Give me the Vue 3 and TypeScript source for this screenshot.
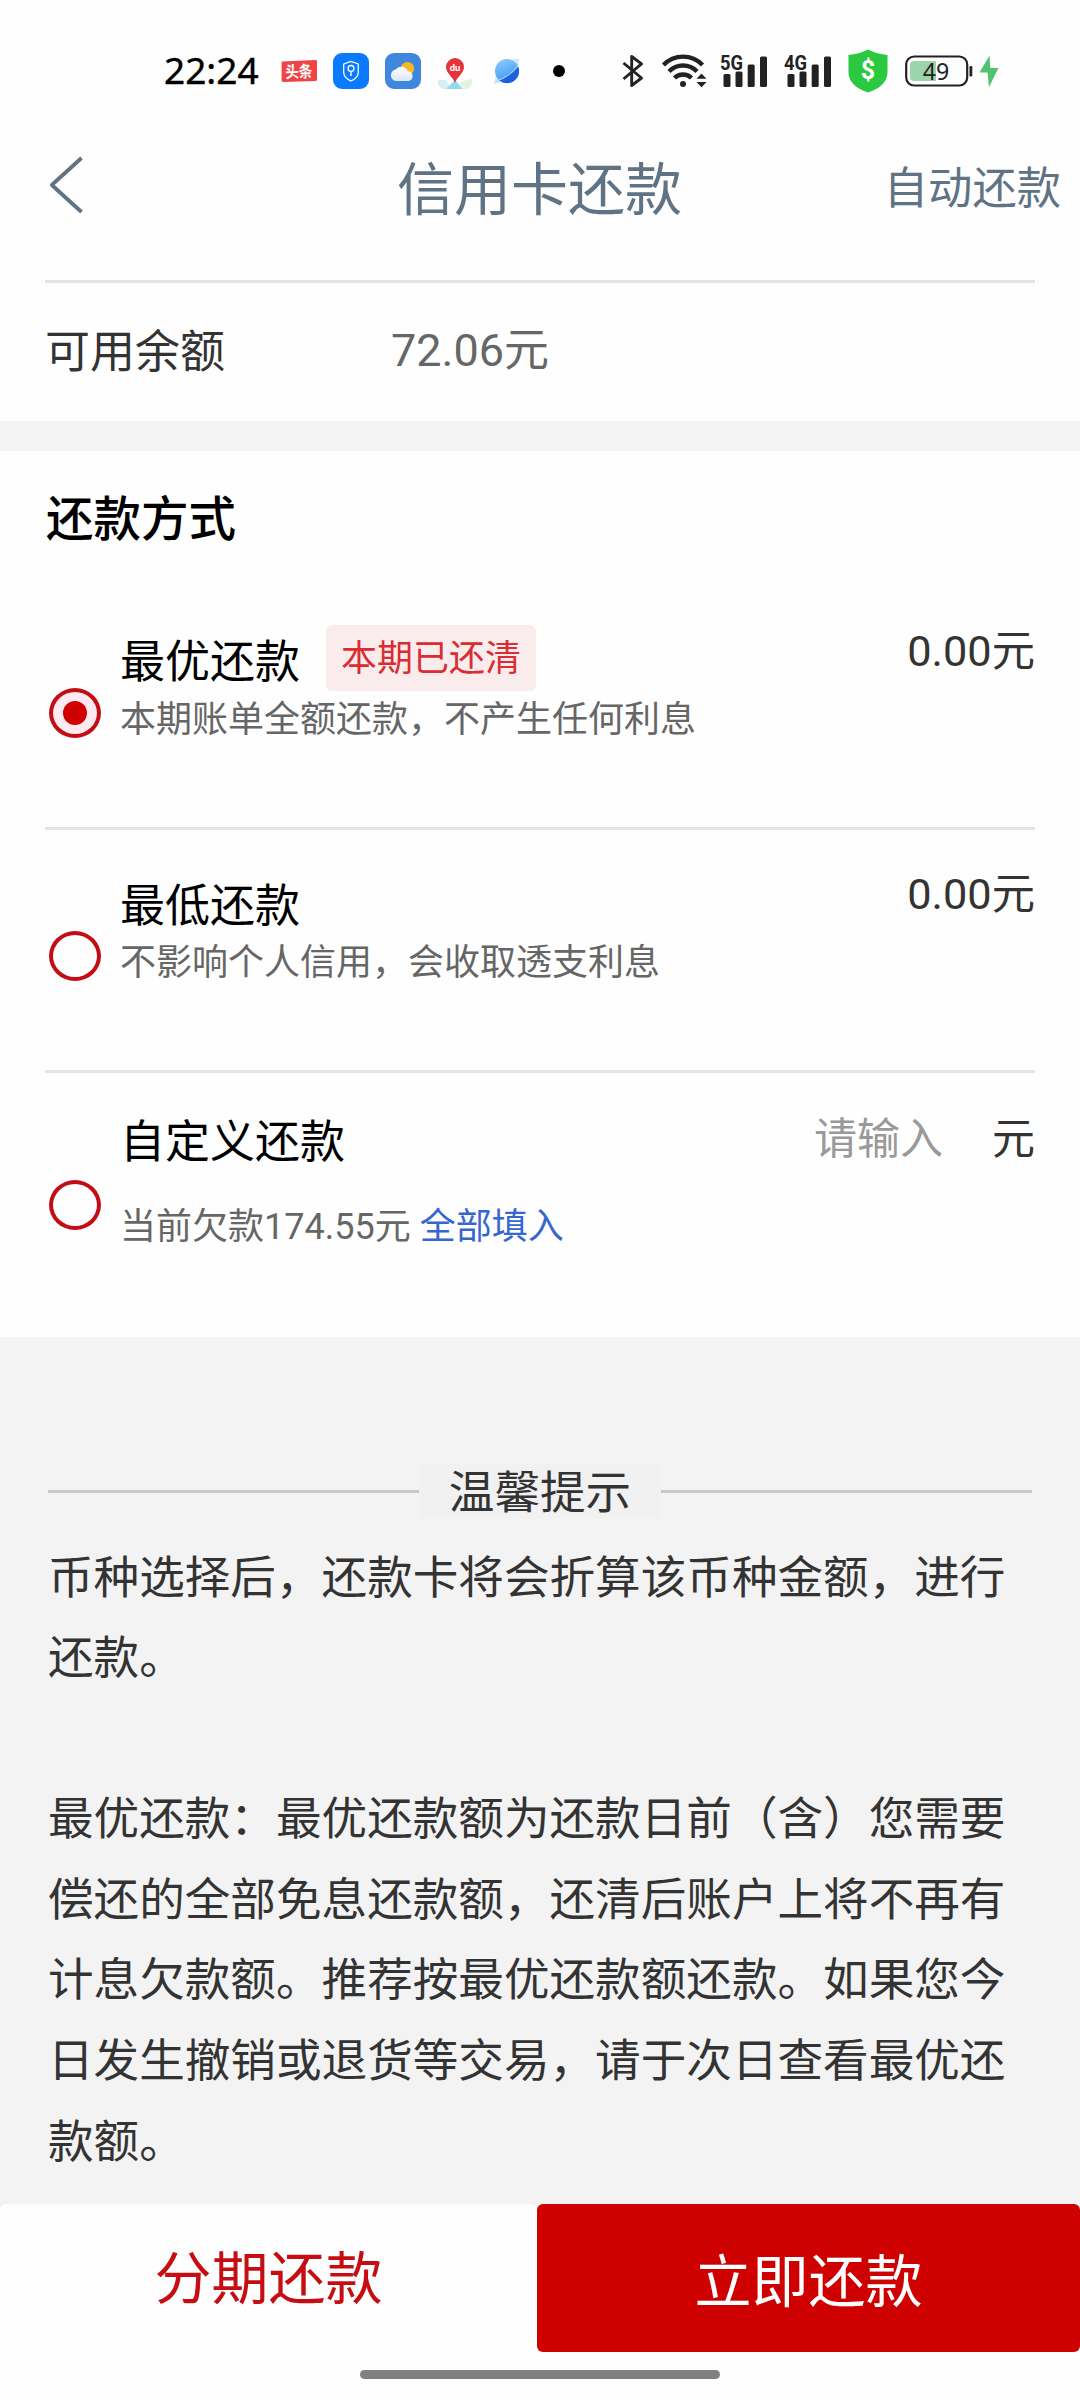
<script setup lang="ts">
interface RepayOption {
  id: string
  title: string
  tag?: string
  desc: string
  amount?: string
  fillAction?: string
}

const options: RepayOption[] = [
  { id: 'best', title: '最优还款', tag: '本期已还清', desc: '本期账单全额还款，不产生任何利息', amount: '0.00元' },
  { id: 'minimum', title: '最低还款', desc: '不影响个人信用，会收取透支利息', amount: '0.00元' },
  { id: 'custom', title: '自定义还款', desc: '当前欠款174.55元', fillAction: '全部填入' },
]
const selected = 'best'

const tips: string[] = [
  '币种选择后，还款卡将会折算该币种金额，进行还款。',
  '最优还款：最优还款额为还款日前（含）您需要偿还的全部免息还款额，还清后账户上将不再有计息欠款额。推荐按最优还款额还款。如果您今日发生撤销或退货等交易，请于次日查看最优还款额。',
]

const networks: string[] = ['5G', '4G']
</script>

<template>
  <div class="page">
    <div class="status">
      <span class="clock">22:24</span>
      <div class="apps">
        <svg class="app-news" width="36" height="36" viewBox="0 0 36 36">
          <path d="M1 8.500 L34.600 7 Q36 7 36 8.400 V26.600 Q36 28 34.600 28 L2 29 Q.6 29 .6 27.600 V9.500Z" fill="#ef4444" />
          <text transform="translate(18 24.500) rotate(-2) scale(1 1.200)" text-anchor="middle" font-size="13.500" font-weight="700" fill="#fff" font-family="'Noto Sans CJK SC', sans-serif">头条</text>
        </svg>
        <svg width="36" height="36" viewBox="0 0 36 36">
          <rect width="36" height="36" rx="9" fill="#0a7bff" />
          <path d="M18 8.300 L25.300 11 V19.500 Q25.300 24.500 18 28 Q10.700 24.500 10.700 19.500 V11Z" fill="none" stroke="#fff" stroke-width="1.300" stroke-linejoin="round" />
          <circle cx="18" cy="15.400" r="2.900" fill="none" stroke="#fff" stroke-width="1.300" />
          <path d="M18 18.400 V23" stroke="#fff" stroke-width="1.400" />
        </svg>
        <svg width="36" height="36" viewBox="0 0 36 36">
          <defs>
            <linearGradient id="cloud" x1="0" y1="0" x2="0" y2="1">
              <stop offset="0" stop-color="#fff" /><stop offset="1" stop-color="#dce6f2" />
            </linearGradient>
          </defs>
          <rect width="36" height="36" rx="9" fill="#3e87dc" />
          <circle cx="22.500" cy="15.500" r="6.600" fill="#f9b826" />
          <path d="M11.500 28 A5.800 5.800 0 0 1 10.600 16.500 A7 7 0 0 1 22.800 18.300 A4.900 4.900 0 0 1 23.600 28Z" fill="url(#cloud)" />
        </svg>
        <svg width="36" height="36" viewBox="0 0 36 36">
          <path d="M1 27 L9 27 L14 36 H8 Q2 36 1 30Z" fill="#d7eef4" />
          <path d="M35 26 L26 28 L22 31 L27 36 Q34 36 35 30Z" fill="#e4f3d9" />
          <path d="M18 27 L26 36 H9Z" fill="#8fdcee" />
          <path d="M18 30 C17 25 9 20.500 9 14 A9 9 0 0 1 27 14 C27 20.500 19 25 18 30Z" fill="#e5323b" />
          <text x="18" y="17.500" text-anchor="middle" font-size="9.500" font-weight="700" fill="#fff" font-family="Roboto, sans-serif">du</text>
        </svg>
        <svg width="36" height="36" viewBox="0 0 36 36">
          <defs>
            <linearGradient id="planet" x1="0.200" y1="0" x2="0.600" y2="1">
              <stop offset="0" stop-color="#8accfb" /><stop offset="1" stop-color="#3b93f5" />
            </linearGradient>
          </defs>
          <path d="M22 7 L30 5.500 L29.500 13Z M7 22 L5 31 L14 29Z" fill="#cdeafd" />
          <circle cx="18" cy="18" r="12" fill="url(#planet)" />
          <path d="M29.300 14 A12 12 0 0 1 10.500 27.500 Q22 23 29.300 14Z" fill="#1f5fdc" />
          <path d="M7.500 28 Q21 23.500 29 12.500" fill="none" stroke="#a9dafc" stroke-width="1" />
        </svg>
      </div>
      <i class="more-dot"></i>
      <svg class="bluetooth" width="22" height="34" viewBox="0 0 22 34">
        <path d="M1.500 9 L19.500 24 L9.700 31.500 V2.500 L19.500 9.800 L1.500 25" fill="none" stroke="#222" stroke-width="2.900" stroke-linejoin="round" />
      </svg>
      <svg class="wifi" width="45" height="34" viewBox="0 0 45 34">
        <g fill="none" stroke="#222" stroke-width="4.400">
          <path d="M1.500 12 A27 27 0 0 1 40.500 12" transform="translate(0 -1)" />
          <path d="M7 18 A19.500 19.500 0 0 1 35 18" transform="translate(0 -.5)" />
          <path d="M12.500 24 A12 12 0 0 1 29.500 24" />
        </g>
        <circle cx="21" cy="30" r="3" fill="#222" />
        <path d="M34.500 24.700 L39.500 19.500 L44.500 24.700Z M34.500 28 H44.500 L39.500 33.200Z" fill="#222" />
      </svg>
      <svg v-for="net in networks" :key="net" class="signal" width="48" height="34" viewBox="0 0 48 34">
        <g fill="#222">
          <rect x="3.500" y="20" width="7" height="13" rx="1.500" />
          <rect x="15.500" y="17.500" width="7" height="15.500" rx="1.500" />
          <rect x="27.700" y="10.500" width="7" height="22.500" rx="1.500" />
          <rect x="40" y="2.500" width="7" height="30.500" rx="1.500" />
        </g>
        <text x="0" y="15.500" font-size="20.500" font-weight="700" fill="#222" textLength="23" lengthAdjust="spacingAndGlyphs" font-family="Roboto, sans-serif">{{ net }}</text>
      </svg>
      <svg class="guard" width="40" height="44" viewBox="0 0 40 44">
        <path d="M20 .5 Q29 5 39.500 6 V23 Q39.500 37 20 43.500 Q.5 37 .5 23 V6 Q11 5 20 .5Z" fill="#2bc940" />
        <text x="20" y="30" text-anchor="middle" font-size="25" font-weight="700" fill="#fff" font-family="Roboto, sans-serif">$</text>
      </svg>
      <svg class="battery" width="94" height="34" viewBox="0 0 94 34">
        <rect x="1.200" y="2.500" width="61" height="29" rx="8" fill="none" stroke="#222" stroke-width="2.200" />
        <path d="M9 7 H31 V27 H9 Q5 27 5 23 V11 Q5 7 9 7Z" fill="#9dd5aa" />
        <rect x="64.500" y="12" width="2.800" height="10.500" rx="1.200" fill="#222" />
        <text x="31" y="25.600" text-anchor="middle" font-size="24" fill="#222" textLength="26.500" lengthAdjust="spacingAndGlyphs" font-family="'Noto Sans', sans-serif">49</text>
        <path d="M84.500 1.500 L74.500 18.500 H82.500 L84 33 L93.500 14 H85.300Z" fill="#4fc36f" />
      </svg>
    </div>

    <header class="nav">
      <svg class="back" width="34" height="58" viewBox="0 0 34 58">
        <path d="M32.500 2 L2.800 29 L32.500 56" fill="none" stroke="#5f7384" stroke-width="3.800" stroke-linejoin="round" />
      </svg>
      <h1>信用卡还款</h1>
      <span class="auto">自动还款</span>
    </header>

    <section class="balance">
      <div class="balance-row">
        <span class="label">可用余额</span>
        <span class="value">72.06元</span>
      </div>
    </section>

    <section class="methods">
      <h2>还款方式</h2>
      <div v-for="opt in options" :key="opt.id" class="option" :class="opt.id">
        <span class="radio" :class="{ on: opt.id === selected }"></span>
        <div class="info">
          <div class="title-row">
            <span class="title">{{ opt.title }}</span>
            <span v-if="opt.tag" class="tag">{{ opt.tag }}</span>
          </div>
          <div class="desc">{{ opt.desc }}<a v-if="opt.fillAction">{{ opt.fillAction }}</a></div>
        </div>
        <div v-if="opt.amount" class="amount">{{ opt.amount }}</div>
        <div v-else class="amount"><span class="placeholder">请输入</span><span>元</span></div>
      </div>
    </section>

    <section class="tips">
      <div class="tips-head"><i></i><span>温馨提示</span><i></i></div>
      <p v-for="(tip, i) in tips" :key="i">{{ tip }}</p>
    </section>

    <footer>
      <div class="buttons">
        <div class="btn installment">分期还款</div>
        <div class="btn pay">立即还款</div>
      </div>
      <i class="home"></i>
    </footer>
  </div>
</template>

<style>
body {
  margin: 0;
  background: #fff;
}
</style>

<style scoped>
.page {
  width: 1080px;
  height: 2400px;
  display: flex;
  flex-direction: column;
  overflow: hidden;
  background: #fefefe;
  color: #333;
  font-family: Roboto, 'Noto Sans CJK SC', sans-serif;
}
.page * {
  box-sizing: border-box;
}
svg {
  display: block;
  flex: none;
  overflow: visible;
}

.status {
  height: 142px;
  flex: none;
  display: flex;
  align-items: center;
  padding-left: 164px;
}
.clock {
  width: 117px;
  margin-top: -2px;
  font: 400 37px/50px 'Noto Sans', sans-serif;
  -webkit-text-stroke: 0.4px #000;
  color: #000;
}
.apps {
  display: flex;
  gap: 16px;
}
.more-dot {
  width: 12px;
  height: 12px;
  margin-left: 28px;
  border-radius: 50%;
  background: #000;
}
.bluetooth {
  margin-left: 57px;
}
.wifi {
  margin-left: 18px;
}
.signal {
  margin-left: 13px;
}
.signal + .signal {
  margin-left: 15.5px;
}
.guard {
  margin-left: 16px;
}
.battery {
  margin-left: 17.5px;
}

.nav {
  height: 94px;
  flex: none;
  display: grid;
  grid-template-columns: 1fr auto 1fr;
  align-items: center;
  padding: 0 19px 0 49px;
  color: #5f7384;
}
.back {
  margin-top: -8px;
}
.nav h1 {
  margin: 4px 0 0 -31px;
  font-size: 57px;
  line-height: 80px;
  font-weight: 400;
}
.auto {
  justify-self: end;
  font-size: 44.3px;
  line-height: 60px;
}

.balance {
  flex: none;
  padding: 44px 45px 0;
  border-bottom: 30px solid #f3f3f3;
}
.balance-row {
  height: 141px;
  border-top: 3px solid #e4e4e4;
  display: flex;
  align-items: flex-start;
  padding-top: 42px;
  font-size: 45px;
  line-height: 56px;
}
.label {
  width: 346px;
}
.value {
  margin-top: -2px;
  color: #666;
}

.methods {
  flex: none;
  height: 886px;
  padding: 0 45px;
}
.methods h2 {
  margin: 0 0 0 1px;
  height: 136px;
  font-size: 47.5px;
  line-height: 138px;
  font-weight: 500;
  color: #000;
}
.option {
  height: 243px;
  display: flex;
  align-items: flex-start;
  border-bottom: 3px solid #e4e4e4;
}
.option.custom {
  border-bottom: 0;
}
.radio {
  width: 52px;
  height: 50px;
  margin: 101px 19px 0 4px;
  flex: none;
  display: flex;
  align-items: center;
  justify-content: center;
  border: 4px solid #c20d14;
  border-radius: 50%;
}
.custom .radio {
  margin-top: 107px;
}
.radio.on {
  background: #fdeaf0;
}
.radio.on::before {
  content: '';
  width: 24px;
  height: 24px;
  border-radius: 50%;
  background: #cf0000;
}
.info {
  flex: 1;
  padding-top: 38px;
}
.title-row {
  height: 66px;
  display: flex;
  align-items: center;
}
.title {
  padding-top: 10px;
  font-size: 45px;
  line-height: 58px;
  color: #000;
}
.tag {
  height: 66px;
  margin-left: 26px;
  padding: 2px 15px 0;
  border-radius: 6px;
  background: #faecec;
  color: #da2c33;
  font-size: 36px;
  line-height: 64px;
  width: 210px;
  white-space: nowrap;
}
.desc {
  margin-top: 3px;
  font-size: 36px;
  line-height: 52px;
  color: #666;
}
.desc a {
  margin-left: 9px;
  color: #3667d0;
}
.minimum .title {
  padding-top: 12px;
}
.custom .info {
  padding-top: 32px;
}
.custom .desc {
  margin-top: 30px;
}
.amount {
  padding-top: 38px;
  font-size: 43.3px;
  line-height: 54px;
}
.custom .amount {
  padding-top: 39px;
  font-size: 43px;
}
.placeholder {
  margin-right: 49px;
  color: #999;
}

.tips {
  flex: none;
  height: 867px;
  padding: 127px 48px 0;
  overflow: hidden;
  background: #f3f3f3;
  font-size: 45.6px;
}
.tips-head {
  height: 54px;
  margin-bottom: 20.5px;
  display: flex;
  align-items: center;
}
.tips-head i {
  flex: 1;
  height: 3px;
  background: #c9c9c9;
}
.tips-head span {
  width: 242px;
  height: 54px;
  text-align: center;
  line-height: 59px;
  background: #f1f1f1;
}
.tips p {
  margin: 0 0 80.6px;
  line-height: 80.6px;
}

footer {
  flex: none;
  height: 196px;
  background: linear-gradient(#f3f3f3 60px, #fefefe 60px);
}
.buttons {
  display: flex;
}
.btn {
  height: 148px;
  border-radius: 6px;
  font-size: 57px;
  text-align: center;
}
.installment {
  width: 537px;
  line-height: 152px;
  background: #fefefe;
  color: #c50d12;
}
.pay {
  width: 543px;
  line-height: 158px;
  background: #ce0000;
  color: #fff;
}
.home {
  display: block;
  width: 360px;
  height: 9px;
  margin: 18px auto 0;
  border-radius: 5px;
  background: #808080;
}
</style>
